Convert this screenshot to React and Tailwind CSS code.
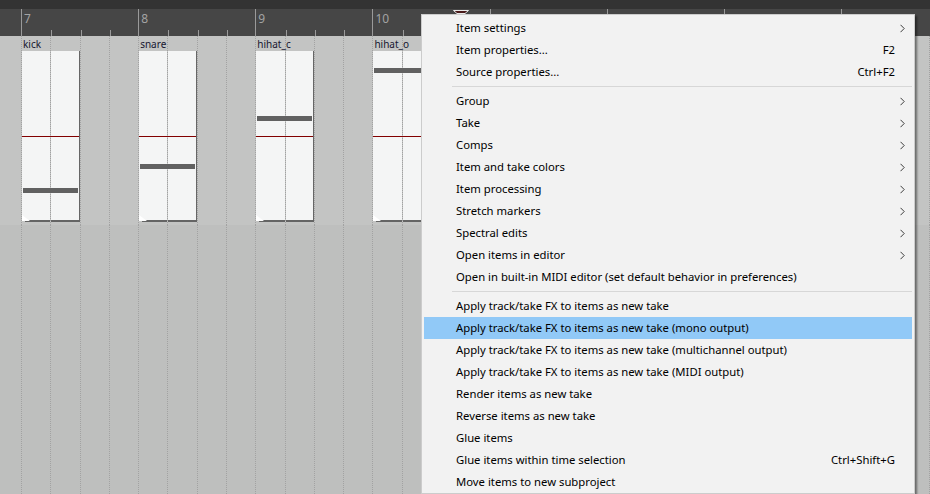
import React from "react";

const BARS = [7, 8, 9, 10, 11, 12, 13, 14];

// items on the first track: bar -> [label, note top offset]
const ITEMS = {
  7: ["kick", 152],
  8: ["snare", 128],
  9: ["hihat_c", 80],
  10: ["hihat_o", 32],
};

const MENU = [
  { label: "Item settings", sub: true },
  { label: "Item properties...", key: "F2" },
  { label: "Source properties...", key: "Ctrl+F2" },
  { sep: true },
  { label: "Group", sub: true },
  { label: "Take", sub: true },
  { label: "Comps", sub: true },
  { label: "Item and take colors", sub: true },
  { label: "Item processing", sub: true },
  { label: "Stretch markers", sub: true },
  { label: "Spectral edits", sub: true },
  { label: "Open items in editor", sub: true },
  { label: "Open in built-in MIDI editor (set default behavior in preferences)" },
  { sep: true },
  { label: "Apply track/take FX to items as new take" },
  { label: "Apply track/take FX to items as new take (mono output)", active: true },
  { label: "Apply track/take FX to items as new take (multichannel output)" },
  { label: "Apply track/take FX to items as new take (MIDI output)" },
  { label: "Render items as new take" },
  { label: "Reverse items as new take" },
  { label: "Glue items" },
  { label: "Glue items within time selection", key: "Ctrl+Shift+G" },
  { label: "Move items to new subproject" },
];

function Ruler() {
  return (
    <div className="flex h-[27px] shrink-0 bg-[#464646] overflow-hidden">
      <div className="w-[21px] shrink-0" />
      {BARS.map((n) => (
        <div key={n} className="flex w-[117.15px] shrink-0 border-l border-[#9a9a9a]">
          <div className="relative w-[29.29px] shrink-0">
            <span className="absolute left-[2px] top-[1px] text-[12px] text-[#a3a3a3]">{n}</span>
          </div>
          {[1, 2, 3].map((b) => (
            <div key={b} className="flex w-[29.29px] shrink-0 items-end">
              <div className="h-[6px] border-l border-[#9a9a9a]" />
            </div>
          ))}
        </div>
      ))}
    </div>
  );
}

function Beat() {
  return <div className="w-[29.29px] shrink-0 border-l border-dotted border-[#a2a2a2]" />;
}

function ItemHalf({ last }) {
  return (
    <div className="flex w-[29.29px] shrink-0 flex-col border-l border-dotted border-[#a2a2a2]">
      <div className="h-[15px] shrink-0" />
      <div className={`flex-1 bg-[#f4f5f5] ${last ? "border-r border-[#666]" : ""}`} />
      <div className={`h-[2px] shrink-0 bg-[#646464] ${last ? "" : "ml-[3px]"}`} />
      <div className="h-[3px] shrink-0" />
    </div>
  );
}

function Item({ label, note }) {
  return (
    <div className="relative flex shrink-0">
      <ItemHalf />
      <ItemHalf last />
      <span className="absolute left-[2px] top-[1px] whitespace-nowrap text-[10px] leading-[14px] text-[#161630]">
        {label}
      </span>
      <div className="absolute left-[1px] right-[1px] top-[100px] h-[1px] bg-[#820000]" />
      <div className="absolute left-[2px] right-[2px] h-[5px] bg-[#616161]" style={{ top: note }} />
      <svg className="absolute left-[1px] top-[179px]" width="8" height="6" viewBox="0 0 8 6">
        <polygon points="0,0 0,6 8,6" fill="#ffffff" />
      </svg>
    </div>
  );
}

function TrackRow() {
  return (
    <div className="flex h-[189px] shrink-0 bg-[#c3c4c3] overflow-hidden">
      <div className="w-[21px] shrink-0" />
      {BARS.map((n) => (
        <div key={n} className="flex w-[117.15px] shrink-0">
          {ITEMS[n] ? (
            <Item label={ITEMS[n][0]} note={ITEMS[n][1]} />
          ) : (
            <>
              <Beat />
              <Beat />
            </>
          )}
          <Beat />
          <Beat />
        </div>
      ))}
    </div>
  );
}

function EmptyRow() {
  return (
    <div className="flex flex-1 bg-[#bebfbe] overflow-hidden">
      <div className="w-[21px] shrink-0" />
      {BARS.map((n) => (
        <div key={n} className="flex w-[117.15px] shrink-0">
          <Beat />
          <Beat />
          <Beat />
          <Beat />
        </div>
      ))}
    </div>
  );
}

function Chevron() {
  return (
    <svg width="5" height="9" viewBox="0 0 5 9">
      <path d="M0.5 0.8 L4.2 4.5 L0.5 8.2" fill="none" stroke="#3c3c3c" strokeWidth="1" />
    </svg>
  );
}

function ContextMenu() {
  return (
    <div className="absolute left-[421px] top-[14px] w-[494px] border border-[#cccccc] bg-[#f2f2f2] px-[2px] pt-[2px] shadow-[2px_2px_2px_rgba(0,0,0,0.45)] text-[11.3px] text-black">
      {MENU.map((m, i) =>
        m.sep ? (
          <div key={i} className="flex h-[7px] items-center pl-[28px]">
            <div className="h-[1px] w-full bg-[#d7d7d7]" />
          </div>
        ) : (
          <div
            key={i}
            className={`flex h-[22px] items-center pl-[32px] ${m.active ? "bg-[#91c9f7]" : ""}`}
          >
            <span className="flex-1 whitespace-nowrap">{m.label}</span>
            {m.key && <span className="whitespace-nowrap">{m.key}</span>}
            <div className="flex w-[17px] shrink-0 justify-start pl-[5px]">{m.sub && <Chevron />}</div>
          </div>
        )
      )}
    </div>
  );
}

export default function App() {
  return (
    <div
      className="relative flex h-[494px] w-[930px] flex-col overflow-hidden bg-[#bebfbe]"
      style={{ fontFamily: '"Noto Sans", "Liberation Sans", sans-serif' }}
    >
      <div className="h-[9px] shrink-0 bg-[#333333]" />
      <Ruler />
      <TrackRow />
      <EmptyRow />
      {/* edit cursor marker, mostly hidden by the menu */}
      <svg className="absolute left-[453px] top-[10px]" width="16" height="4" viewBox="0 0 16 4">
        <polygon points="0.5,0.5 15.5,0.5 12,3.5 4,3.5" fill="#4a1a1a" stroke="#e8e8e8" strokeWidth="1" />
      </svg>
      <ContextMenu />
    </div>
  );
}
